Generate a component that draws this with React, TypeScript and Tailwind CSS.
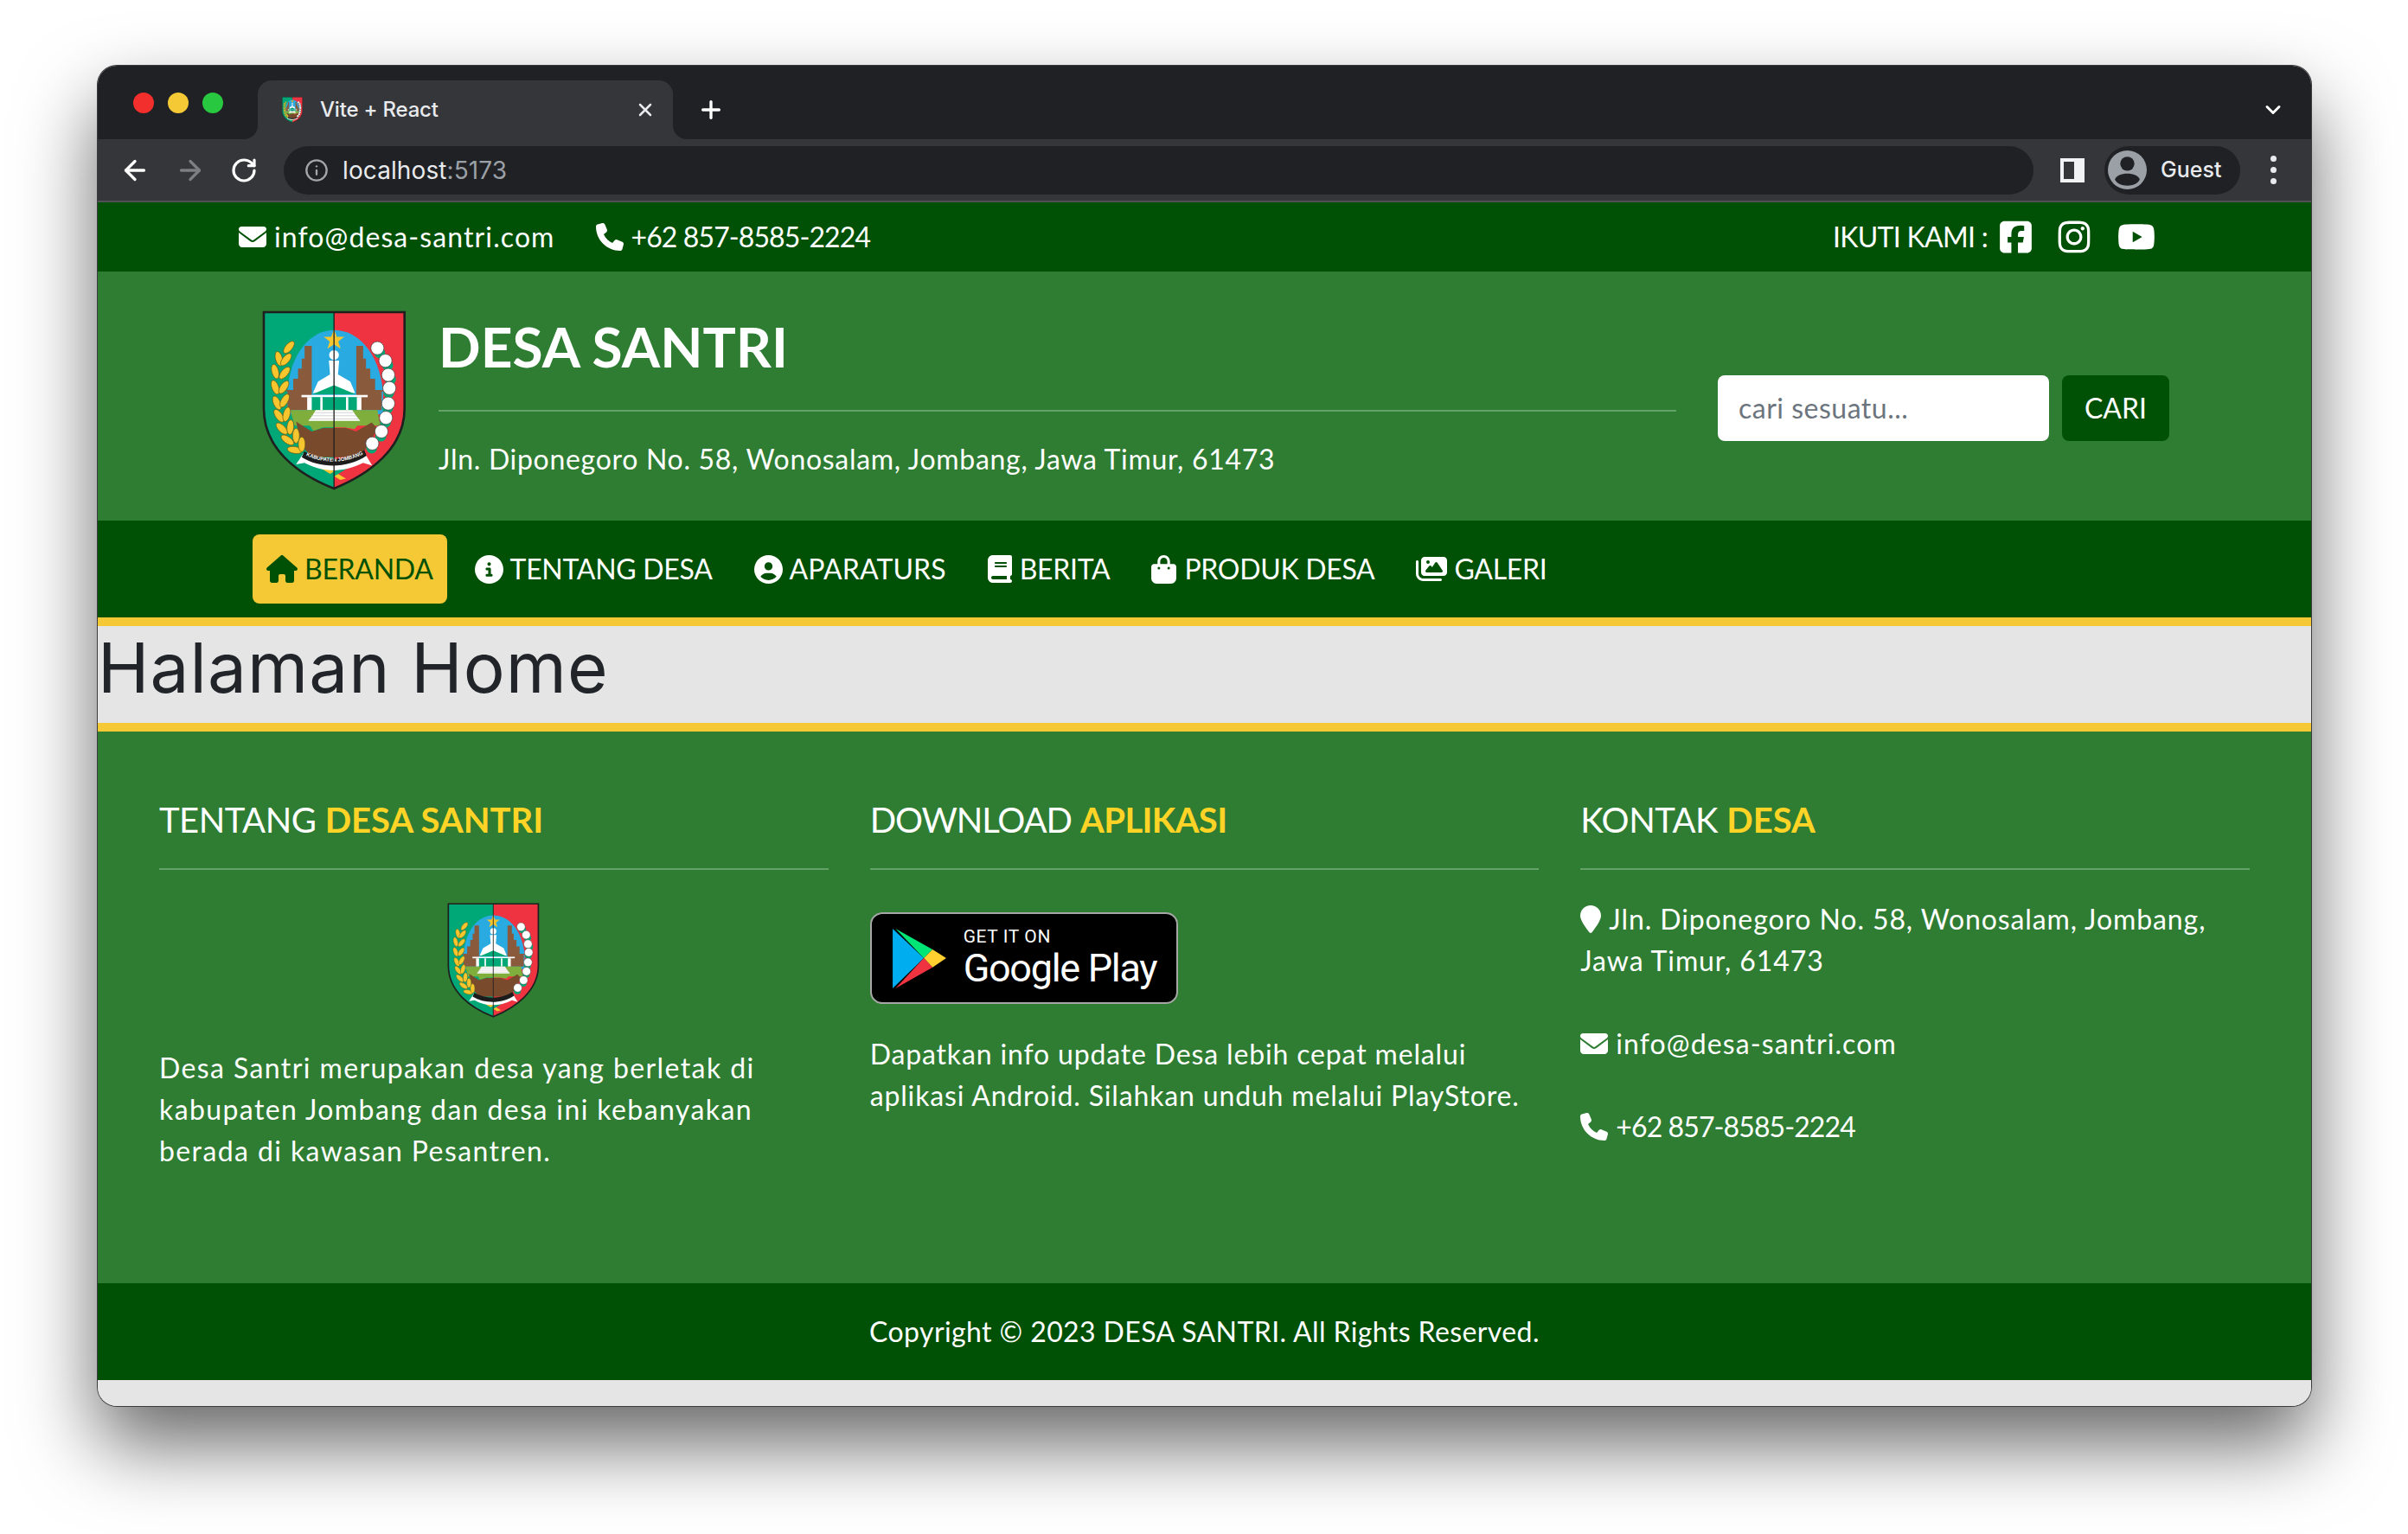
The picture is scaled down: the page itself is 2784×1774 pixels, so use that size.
import React from "react";
import {
  FaEnvelope, FaPhone, FaSquareFacebook, FaInstagram, FaYoutube, FaHouse,
  FaCircleInfo, FaCircleUser, FaBook, FaBagShopping, FaImages, FaLocationPin,
} from "react-icons/fa6";
import { ArrowLeft, ArrowRight, RotateCw, X, Plus, ChevronDown, Info } from "lucide-react";

const FONT = "font-['Lato','Open_Sans',sans-serif]";

function Emblem({ className, text = true }: { className: string; text?: boolean }) {
  const leaves: [number, number, number][] = [
    [160, 185, 40], [125, 225, -15], [150, 228, 40], [112, 270, -15], [145, 275, 40], [112, 325, -20],
    [142, 325, 35], [118, 380, -25], [145, 372, 30], [125, 425, -35], [152, 420, 15], [135, 470, -45],
    [165, 465, 5], [155, 510, -55], [185, 495, 0], [180, 545, -80], [205, 525, 0],
  ];
  const cotton: [number, number][] = [
    [470, 188], [498, 232], [508, 282], [512, 328], [508, 382], [500, 432], [484, 480], [452, 522],
  ];
  return (
    <svg viewBox="66 56 506 630" className={className}>
      <path d="M72 62H318V680C190 630 72 540 72 400Z" fill="#00a878" />
      <path d="M318 62H565V400C565 540 440 630 318 680Z" fill="#ef3340" />
      <path d="M155 340C165 200 240 125 318 125C400 125 475 200 490 340V420H155Z" fill="#29abe2" />
      <path d="M215 180H240V340H150V335H175V295H192V260H205V225H215Z" fill="#8a5a3c" />
      <path d="M420 180H396V340H490V335H462V295H445V260H430V225H420Z" fill="#8a5a3c" />
      <path d="M155 335H240V405H155ZM396 335H485V405H396Z" fill="#8a5a3c" />
      <path d="M318 122L328 148H354L333 165L341 190L318 175L295 190L303 165L282 148H308Z" fill="#f7c52d" />
      <circle cx="318" cy="212" r="17" fill="#fff" />
      <path d="M300 232H336L332 280L375 305L392 345H244L262 305L304 280Z" fill="#fff" />
      <path d="M242 350L318 318L394 350Z" fill="#00a878" />
      <rect x="204" y="352" width="232" height="8" fill="#fff" />
      <rect x="232" y="360" width="170" height="48" fill="#00a878" />
      <path d="M224 360h16v45h-16zM270 360h8v45h-8zM360 360h8v45h-8zM398 360h16v45h-16z" fill="#fff" />
      <path d="M165 405H470L480 460H180Z" fill="#7fae3c" />
      <path d="M185 445L240 480L280 468H360L395 480L450 448L470 470L430 540L400 570H240L205 530Z" fill="#7a4a2c" />
      <path d="M225 445H412L390 472L355 466H280L245 478Z" fill="#7fae3c" />
      <path d="M254 405H382L395 425L410 443H228L242 425Z" fill="#fff" />
      <path d="M238 425H398M250 414H386M232 436H404" stroke="#bbb" strokeWidth="2" />
      <path d="M250 580L360 645L340 650L240 590Z" fill="#f7c52d" />
      <path d="M395 575L285 640L300 648L405 585Z" fill="#00a878" />
      <path d="M185 595L212 555C280 600 360 600 425 555L452 600L420 590C350 625 280 625 215 590Z" fill="#fff" />
      <path d="M205 570C270 610 365 610 432 565L424 545C360 585 280 585 214 550Z" fill="#1c1c1c" />
      {text && (
        <>
          <path id="ribbon" d="M205 556C275 596 360 596 435 552" fill="none" />
          <text fill="#fff" fontSize="18" fontWeight="700" fontFamily="'Liberation Sans',sans-serif">
            <textPath href="#ribbon" startOffset="50%" textAnchor="middle">KABUPATEN JOMBANG</textPath>
          </text>
        </>
      )}
      {leaves.map(([x, y, r], i) => (
        <ellipse key={i} cx={x} cy={y} rx="12" ry="26" fill="#f7c52d" stroke="#6d5a10" strokeWidth="2" transform={`rotate(${r} ${x} ${y})`} />
      ))}
      {cotton.map(([x, y], i) => (
        <g key={i}>
          <circle cx={x + (i < 3 ? 8 : -2)} cy={y + 16} r="19" fill="#00a878" />
          <circle cx={x} cy={y} r="23" fill="#fff" stroke="#333" strokeWidth="2" />
        </g>
      ))}
      <path d="M318 62V680" stroke="#1f1f1f" strokeWidth="4" />
      <path d="M72 62H565V400C565 540 440 630 318 680C190 630 72 540 72 400Z" fill="none" stroke="#1f1f1f" strokeWidth="8" />
    </svg>
  );
}

function PlayBadge() {
  return (
    <div className="w-[356px] h-[106px] bg-black rounded-[14px] border-2 border-[#a6a6a6] flex items-center pl-[24px] gap-[20px] text-white">
      <svg viewBox="158 107 184 205" className="w-[62px] h-[69px]">
        <path d="M158 107L265 208L158 312Z" fill="#00aeef" />
        <path d="M168 107L295 178L265 208Z" fill="#00e676" />
        <path d="M295 178L342 208L295 240L265 208Z" fill="#ffd02f" />
        <path d="M265 208L295 240L168 312Z" fill="#ef3340" />
      </svg>
      <div className="flex flex-col font-['Roboto',sans-serif]">
        <span className="text-[21px] leading-[24px] tracking-[0.6px]">GET IT ON</span>
        <span className="text-[45px] leading-[50px] tracking-[-1.3px]">Google Play</span>
      </div>
    </div>
  );
}

function NavItem({ icon, label, active, gap, track = "tracking-[-0.3px]" }: { icon: React.ReactNode; label: string; active?: boolean; gap: string; track?: string }) {
  return (
    <a className={`h-[80px] flex items-center rounded-[8px] px-[16px] ${gap} ${active ? "bg-[#f4c935] text-[#005005]" : "text-white"}`}>
      {icon}
      <span className={`whitespace-nowrap ${track}`}>{label}</span>
    </a>
  );
}

function FooterHead({ a, b, track = "tracking-[-0.5px]", spanTrack = "tracking-[0px]" }: { a: string; b: string; track?: string; spanTrack?: string }) {
  return (
    <div className="h-[88px] border-b-2 border-[#64a268] text-[40px] leading-[60px] text-white whitespace-nowrap">
      <span className={track}>{a}</span> <span className={`text-[#ffd426] font-bold ${spanTrack}`}>{b}</span>
    </div>
  );
}

export default function App() {
  return (
    <div className="w-[2784px] h-[1774px] bg-white overflow-hidden pt-[76px] pl-[113px]">
      <div className={`w-[2559px] h-[1550px] rounded-[22px] overflow-hidden flex flex-col bg-[#e5e5e5] ring-1 ring-[#3b3b3d] shadow-[0_44px_90px_rgba(0,0,0,0.6)] ${FONT}`}>
        {/* Tab strip */}
        <div className="h-[85px] bg-[#202124] flex items-end shrink-0 font-['Inter',sans-serif]">
          <div className="w-[185px] h-[85px] pl-[41px] pt-[31px] flex gap-[16px] items-start shrink-0">
            <span className="w-[24px] h-[24px] rounded-full bg-[#f22f2c]" />
            <span className="w-[24px] h-[24px] rounded-full bg-[#f4c935]" />
            <span className="w-[24px] h-[24px] rounded-full bg-[#28c840]" />
          </div>
          <div className="relative w-[480px] h-[68px] bg-[#35363a] rounded-t-[16px] flex items-center pl-[28px] pr-[20px] text-white shrink-0">
            <span className="absolute -left-[16px] bottom-0 w-[16px] h-[16px] bg-[#35363a]">
              <span className="block w-full h-full bg-[#202124] rounded-br-[16px]" />
            </span>
            <span className="absolute -right-[16px] bottom-0 w-[16px] h-[16px] bg-[#35363a]">
              <span className="block w-full h-full bg-[#202124] rounded-bl-[16px]" />
            </span>
            <Emblem className="w-[24px] h-[30px] shrink-0" text={false} />
            <span className="ml-[20px] text-[24px] font-medium tracking-[-0.2px] text-[#e8eaed] flex-1">Vite + React</span>
            <X className="w-[24px] h-[24px] text-[#e8eaed]" strokeWidth={2.5} />
          </div>
          <div className="flex-1 h-[68px] flex items-center pl-[28px] pr-[30px] justify-between text-white">
            <Plus className="w-[32px] h-[32px]" strokeWidth={2.5} />
            <ChevronDown className="w-[28px] h-[28px]" strokeWidth={2.5} />
          </div>
        </div>
        {/* Toolbar */}
        <div className="h-[73px] bg-[#35363a] border-b-2 border-[#505154] flex items-center shrink-0 font-['Inter',sans-serif] text-white">
          <div className="w-[215px] pl-[25px] flex gap-[28px] items-center shrink-0">
            <ArrowLeft className="w-[36px] h-[36px]" strokeWidth={2.2} />
            <ArrowRight className="w-[36px] h-[36px] text-[#7d7e81]" strokeWidth={2.2} />
            <RotateCw className="w-[32px] h-[32px]" strokeWidth={2.4} />
          </div>
          <div className="w-[2023px] h-[56px] bg-[#202124] rounded-full flex items-center pl-[24px] text-[28px] shrink-0">
            <Info className="w-[28px] h-[28px] text-[#a3a5a8]" strokeWidth={2} />
            <span className="ml-[16px] text-[#e8eaed] tracking-[0.1px]">localhost<span className="text-[#9aa0a6]">:5173</span></span>
          </div>
          <div className="ml-[31px] w-[28px] h-[28px] border-[4px] border-[#f1f3f4] border-r-[12px] shrink-0" />
          <div className="ml-[23px] w-[157px] h-[56px] rounded-full bg-[#202124] flex items-center pl-[4px] shrink-0">
            <svg viewBox="0 0 44 44" className="w-[45px] h-[45px]">
              <circle cx="22" cy="22" r="22" fill="#9aa0a6" />
              <circle cx="22" cy="15" r="8" fill="#202124" />
              <path d="M8 33C10 24 34 24 36 33C32 42 12 42 8 33Z" fill="#202124" />
            </svg>
            <span className="ml-[16px] text-[25px] font-medium text-[#e8eaed]">Guest</span>
          </div>
          <div className="ml-[35px] flex flex-col gap-[6px]">
            <span className="w-[7px] h-[7px] rounded-full bg-[#e8eaed]" />
            <span className="w-[7px] h-[7px] rounded-full bg-[#e8eaed]" />
            <span className="w-[7px] h-[7px] rounded-full bg-[#e8eaed]" />
          </div>
        </div>
        {/* Top bar */}
        <div className="h-[80px] bg-[#005005] flex items-center pl-[163px] pr-[180px] text-white text-[32px] shrink-0">
          <FaEnvelope className="w-[32px] h-[32px]" />
          <span className="ml-[9px] tracking-[1.1px]">info@desa-santri.com</span>
          <FaPhone className="ml-[47px] w-[32px] h-[32px]" />
          <span className="ml-[9px] tracking-[-0.9px]">+62 857-8585-2224</span>
          <span className="ml-auto tracking-[-0.7px]">IKUTI KAMI :</span>
          <FaSquareFacebook className="ml-[14px] w-[37px] h-[42px]" />
          <FaInstagram className="ml-[30px] w-[38px] h-[42px]" />
          <FaYoutube className="ml-[31px] w-[44px] h-[40px]" />
        </div>
        {/* Header */}
        <div className="h-[288px] bg-[#2e7d32] flex items-center pl-[190px] pr-[163px] text-white shrink-0">
          <Emblem className="w-[167px] h-[208px] shrink-0 mt-[10px]" />
          <div className="ml-[37px] w-[1431px] flex flex-col">
            <div className="h-[117px] border-b-2 border-[#64a268] text-[64px] leading-[84px] font-bold">DESA SANTRI</div>
            <div className="mt-[31px] mb-[2px] text-[32px] leading-[48px] tracking-[0.7px]">Jln. Diponegoro No. 58, Wonosalam, Jombang, Jawa Timur, 61473</div>
          </div>
          <div className="ml-[48px] w-[383px] h-[76px] mt-[28px] bg-white rounded-[8px] flex items-center pl-[24px] text-[32px] tracking-[0.5px] text-[#6c757d] shrink-0">cari sesuatu...</div>
          <div className="ml-[15px] w-[124px] h-[76px] mt-[28px] bg-[#005005] rounded-[8px] flex items-center justify-center text-[32px] shrink-0">CARI</div>
        </div>
        {/* Nav */}
        <nav className="h-[112px] bg-[#005005] flex items-center pl-[179px] gap-[16px] text-[32px] shrink-0">
          <NavItem active gap="gap-[8px]" icon={<FaHouse className="w-[36px] h-[32px]" />} label="BERANDA" />
          <NavItem gap="gap-[8px]" icon={<FaCircleInfo className="w-[33px] h-[33px]" />} label="TENTANG DESA" />
          <NavItem gap="gap-[8px]" track="tracking-[0.1px]" icon={<FaCircleUser className="w-[33px] h-[33px]" />} label="APARATURS" />
          <NavItem gap="gap-[9px]" icon={<FaBook className="w-[28px] h-[32px]" />} label="BERITA" />
          <NavItem gap="gap-[9px]" icon={<FaBagShopping className="w-[29px] h-[33px]" />} label="PRODUK DESA" />
          <NavItem gap="gap-[8px]" icon={<FaImages className="w-[36px] h-[32px]" />} label="GALERI" />
        </nav>
        {/* Page title */}
        <div className="h-[132px] bg-[#e5e5e5] border-y-[10px] border-[#f4c935] flex items-start font-['Inter',sans-serif] text-[80px] leading-[96px] tracking-[1.1px] text-[#212529] shrink-0">
          Halaman Home
        </div>
        {/* Footer columns */}
        <div className="h-[638px] bg-[#2e7d32] grid grid-cols-3 gap-x-[48px] px-[71px] pt-[72px] text-[32px] leading-[48px] text-white shrink-0">
          <div>
            <FooterHead a="TENTANG" b="DESA SANTRI" />
            <div className="flex justify-center mt-[38px]">
              <Emblem className="w-[107px] h-[133px]" text={false} />
            </div>
            <p className="mt-[34px] tracking-[1.4px]">Desa Santri merupakan desa yang berletak di kabupaten Jombang dan desa ini kebanyakan berada di kawasan Pesantren.</p>
          </div>
          <div>
            <FooterHead a="DOWNLOAD" b="APLIKASI" track="tracking-[-1.1px]" spanTrack="tracking-[-0.6px]" />
            <div className="mt-[49px]"><PlayBadge /></div>
            <p className="mt-[34px] tracking-[0.85px]">Dapatkan info update Desa lebih cepat melalui aplikasi Android. Silahkan unduh melalui PlayStore.</p>
          </div>
          <div>
            <FooterHead a="KONTAK" b="DESA" />
            <p className="mt-[33px] tracking-[0.9px]"><FaLocationPin className="inline w-[24px] h-[32px] mr-[9px] align-[-4px]" />Jln. Diponegoro No. 58, Wonosalam, Jombang, Jawa Timur, 61473</p>
            <p className="mt-[48px] flex items-center tracking-[1.1px]"><FaEnvelope className="w-[32px] h-[32px] mr-[9px]" />info@desa-santri.com</p>
            <p className="mt-[48px] flex items-center tracking-[-0.9px]"><FaPhone className="w-[32px] h-[32px] mr-[9px]" />+62 857-8585-2224</p>
          </div>
        </div>
        {/* Copyright */}
        <div className="h-[112px] bg-[#005005] flex items-center justify-center text-white text-[32px] tracking-[0.4px] shrink-0">
          Copyright © 2023 DESA SANTRI. All Rights Reserved.
        </div>
        <div className="flex-1 bg-[#e5e5e5]" />
      </div>
    </div>
  );
}
